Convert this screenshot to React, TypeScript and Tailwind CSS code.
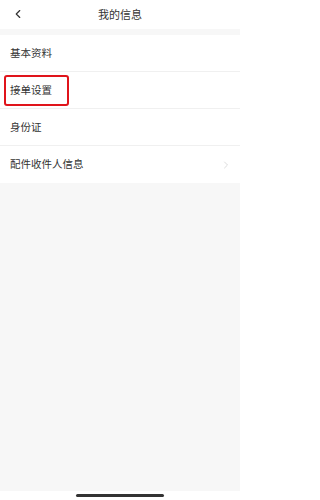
import { ChevronLeft, ChevronRight } from 'lucide-react';

const rows = ['基本资料', '接单设置', '身份证', '配件收件人信息'];

export default function App() {
  return (
    <div
      className="flex min-h-[500px] w-[240px] flex-col bg-[#f7f7f7] text-[#333]"
      style={{ fontFamily: '"Noto Sans CJK SC", "Noto Sans", sans-serif' }}
    >
      {/* header */}
      <div className="relative flex h-[29px] items-center justify-center bg-white">
        <ChevronLeft className="absolute left-[11px] top-[7px] h-[14px] w-[14px] text-[#333]" strokeWidth={2} />
        <span className="text-[11px] leading-none">我的信息</span>
      </div>

      <div className="mt-[6px] bg-white">
        {rows.map((label, i) => (
          <div
            key={label}
            className={
              i < rows.length - 1
                ? 'relative flex h-[37px] items-center border-b border-[#f0f0f0] pl-[10px] pr-[8px]'
                : 'relative flex h-[37px] items-center pl-[10px] pr-[8px]'
            }
          >
            <span className="flex-1 text-[10.5px] leading-none">{label}</span>
            {i === rows.length - 1 && (
              <ChevronRight className="h-[12px] w-[12px] text-[#d0d0d0]" strokeWidth={1.5} />
            )}
            {i === 1 && (
              <div className="absolute left-[4px] top-[3px] h-[31px] w-[65px] rounded-[3px] border-2 border-[#e0141b]" />
            )}
          </div>
        ))}
      </div>

      <div className="flex-1" />

      {/* home indicator */}
      <div className="flex h-[9px] items-start justify-center bg-white pt-[3px]">
        <div className="h-[3px] w-[88px] rounded-full bg-[#333]" />
      </div>
    </div>
  );
}
